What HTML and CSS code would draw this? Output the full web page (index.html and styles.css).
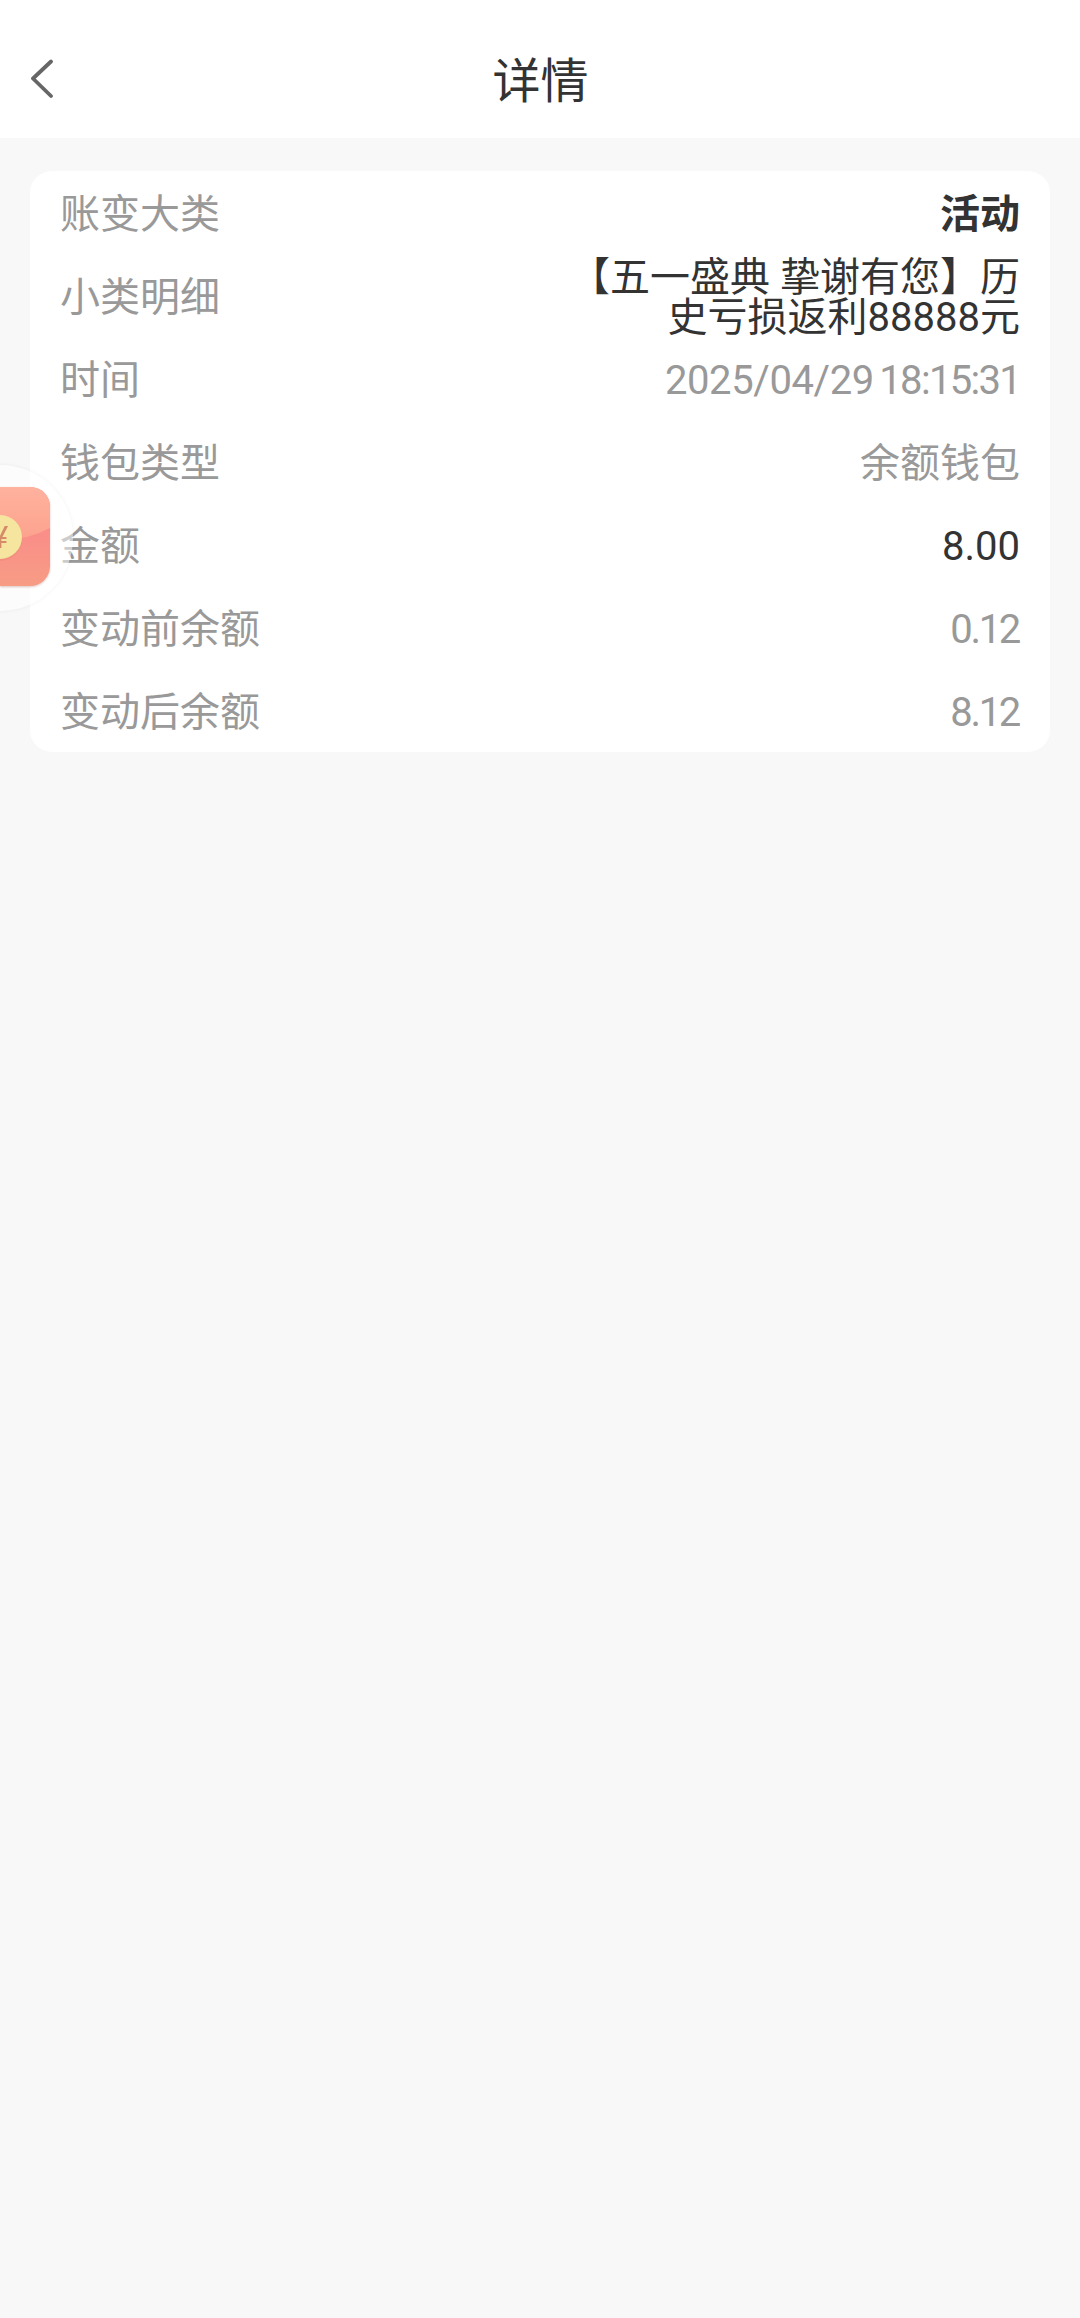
FILE: index.html
```html
<!DOCTYPE html>
<html lang="zh-CN">
<head>
    <meta charset="UTF-8">
    <meta name="viewport" content="width=device-width, initial-scale=1.0">
    <title>详情</title>
    <link rel="stylesheet" href="styles.css">
</head>
<body>
    <header class="header">
        <button class="back" aria-label="返回">
            <svg width="24" height="40" viewBox="0 0 24 40">
                <path d="M21 2.5 3 19.5l18 17.5" />
            </svg>
        </button>
        <h1>详情</h1>
    </header>

    <main class="card">
        <div class="row">
            <span class="label">账变大类</span>
            <span class="value strong">活动</span>
        </div>
        <div class="row">
            <span class="label">小类明细</span>
            <span class="value dark detail">【五一盛典 挚谢有您】历史亏损返利88888元</span>
        </div>
        <div class="row">
            <span class="label">时间</span>
            <span class="value time">2025/04/29 <span class="clock">18:15:31</span></span>
        </div>
        <div class="row">
            <span class="label">钱包类型</span>
            <span class="value">余额钱包</span>
        </div>
        <div class="row">
            <span class="label">金额</span>
            <span class="value dark">8.00</span>
        </div>
        <div class="row">
            <span class="label">变动前余额</span>
            <span class="value balance">0.12</span>
        </div>
        <div class="row">
            <span class="label">变动后余额</span>
            <span class="value balance">8.12</span>
        </div>
    </main>

    <!-- red packet button docked to the left edge -->
    <div class="packet">
        <svg width="73" height="146" viewBox="0 0 73 146">
            <defs>
                <linearGradient id="flap" x1="0" y1="0" x2="0" y2="1">
                    <stop offset="0" stop-color="#ffb29e" />
                    <stop offset="1" stop-color="#fca28d" />
                </linearGradient>
                <linearGradient id="pocket" x1="0" y1="0" x2="0" y2="1">
                    <stop offset="0.4" stop-color="#fa8c89" />
                    <stop offset="1" stop-color="#f79c85" />
                </linearGradient>
                <clipPath id="shape">
                    <rect x="-50" y="22" width="100" height="99" rx="20" />
                </clipPath>
            </defs>
            <g clip-path="url(#shape)">
                <rect x="-50" y="22" width="100" height="99" fill="url(#pocket)" />
                <path d="M-50 22H50v41Q28 75 0 75T-50 63Z" fill="url(#flap)" />
                <circle cx="0" cy="73.5" r="22.5" fill="#f2907f" />
                <circle cx="0" cy="72" r="22" fill="#f6e59e" />
                <text class="yen" x="0" y="83" text-anchor="middle">¥</text>
            </g>
        </svg>
    </div>
</body>
</html>
```
FILE: styles.css
```css
* {
    margin: 0;
    padding: 0;
    box-sizing: border-box;
}

body {
    min-height: 2318px;
    background-color: #f8f8f8;
    color: #333;
    font-family: Roboto, "Noto Sans CJK SC", sans-serif;
    overflow-x: hidden;
}

.header {
    height: 138px;
    padding: 20px 30px 0;
    background-color: #fff;
    display: grid;
    grid-template-columns: 60px 1fr 60px;
    align-items: center;
}

.header h1 {
    padding: 6px 0 0 1px;
    font-size: 48px;
    font-weight: 400;
    line-height: 60px;
    text-align: center;
}

.back {
    border: none;
    background: none;
    display: flex;
    cursor: pointer;
}

.back path {
    fill: none;
    stroke: #666;
    stroke-width: 3.8;
    stroke-linecap: round;
    stroke-linejoin: round;
}

.card {
    margin: 32.5px 30px 0;
    padding: 0 30px;
    background-color: #fff;
    border-radius: 22px;
}

.row {
    height: 83px;
    padding-top: 6px;
    display: flex;
    align-items: center;
    justify-content: space-between;
    font-size: 40px;
    line-height: 40px;
    color: #999;
}

.value {
    text-align: right;
}

.strong {
    color: #333;
    font-weight: 700;
}

.dark {
    color: #333;
}

.detail {
    width: 460px;
}

.time {
    letter-spacing: -0.4px;
    word-spacing: -4px;
}

.clock {
    letter-spacing: -1.7px;
}

.balance {
    padding-right: 1px;
    letter-spacing: -2.3px;
}

.packet {
    position: fixed;
    left: -73px;
    top: 465px;
    width: 146px;
    height: 146px;
    padding-left: 73px;
    border-radius: 50%;
    background-color: rgba(255, 255, 255, 0.5);
    box-shadow: 0 0 4px rgba(0, 0, 0, 0.06);
}

.packet svg {
    display: block;
    filter: drop-shadow(0 1px 1px rgba(150, 70, 50, 0.3));
}

.yen {
    fill: #d68b68;
    font-size: 32px;
}
```
